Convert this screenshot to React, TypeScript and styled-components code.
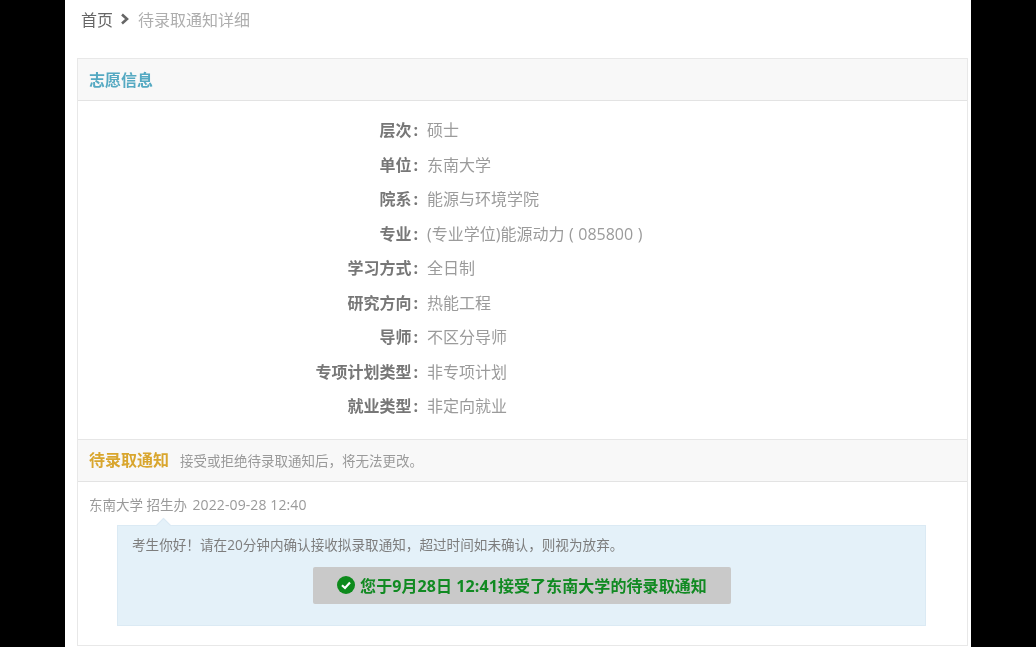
import React from "react";
import styled, { createGlobalStyle } from "styled-components";

const Global = createGlobalStyle`
  html, body { margin: 0; padding: 0; background: #000; }
  body { font-family: "Open Sans", "Noto Sans CJK SC", sans-serif; }
`;

const Stage = styled.div`
  width: 1036px;
  height: 647px;
  background: #000;
  overflow: hidden;
`;

const Sheet = styled.main`
  width: 906px;
  height: 647px;
  margin-left: 65px;
  background: #fff;
  overflow: hidden;
  display: flex;
  flex-direction: column;
  filter: blur(0.5px);
`;

const Breadcrumb = styled.nav`
  height: 58px;
  flex: none;
  box-sizing: border-box;
  padding: 0 0 21px 16px;
  display: flex;
  align-items: center;
  font-size: 16px;
`;

const Crumb = styled.span<{ $current?: boolean }>`
  color: ${(p) => (p.$current ? "#aeaeae" : "#666")};
`;

const Separator = styled.svg`
  width: 10px;
  height: 12px;
  margin: 1px 8px 0 7px;
  flex: none;
`;

const Panel = styled.section`
  margin: 0 3px 0 12px;
  border: 1px solid #e8e8e8;
  height: 588px;
  box-sizing: border-box;
`;

const SectionHead = styled.header`
  height: 42px;
  box-sizing: border-box;
  padding: 0 0 2px 11px;
  display: flex;
  align-items: center;
  background: #f8f8f8;
  border-bottom: 1px solid #e3e3e3;
`;

const SectionTitle = styled.h2<{ $tone: string }>`
  margin: 0;
  font-size: 16px;
  font-weight: 700;
  color: ${(p) => p.$tone};
`;

const SectionNote = styled.span`
  margin: 2px 0 0 11px;
  font-size: 13.5px;
  color: #9a9a9a;
`;

const Rows = styled.dl`
  margin: 0;
  padding: 11px 0 16px;
  border-bottom: 1px solid #e6e6e6;
  display: grid;
  grid-template-columns: 340px 1fr;
  grid-auto-rows: 34.5px;
  column-gap: 9px;
  align-items: center;
  font-size: 16px;
`;

const Label = styled.dt`
  text-align: right;
  font-weight: 700;
  color: #777;
`;

const Colon = styled.span`
  margin-left: 2px;
`;

const Value = styled.dd`
  margin: 0;
  color: #9b9b9b;
  word-spacing: 0.4px;
`;

const Message = styled.div`
  padding: 14px 40px 0 11px;
`;

const Meta = styled.div`
  font-size: 13.5px;
  line-height: 17px;
  color: #9a9a9a;
`;

const MetaTime = styled.span`
  margin-left: 2px;
  font-size: 14px;
  letter-spacing: 0.1px;
`;

const Bubble = styled.div`
  position: relative;
  margin: 11px 0 0 28px;
  height: 101px;
  width: 809px;
  box-sizing: border-box;
  padding: 11px 14px 0;
  background: #e4f1f9;
  border: 1px solid #dbeaf4;
  display: flex;
  flex-direction: column;
  &::before {
    content: "";
    position: absolute;
    left: 40px;
    top: -6px;
    width: 10px;
    height: 10px;
    background: #e4f1f9;
    border-top: 1px solid #dbeaf4;
    border-left: 1px solid #dbeaf4;
    transform: rotate(45deg);
  }
`;

const BubbleText = styled.p`
  margin: 0;
  font-size: 13.6px;
  line-height: 16px;
  color: #7d7d7d;
`;

const Result = styled.div`
  margin: 14px 0 0 181px;
  width: 418px;
  height: 37px;
  border-radius: 2px;
  background: #c9c9c9;
  display: flex;
  align-items: center;
  justify-content: center;
  gap: 5px;
  font-size: 16px;
  font-weight: 700;
  letter-spacing: 0.08px;
  color: #118a22;
`;

const CheckIcon = styled.svg`
  width: 18px;
  height: 18px;
  flex: none;
`;

const rows: [string, string][] = [
  ["层次", "硕士"],
  ["单位", "东南大学"],
  ["院系", "能源与环境学院"],
  ["专业", "(专业学位)能源动力 ( 085800 )"],
  ["学习方式", "全日制"],
  ["研究方向", "热能工程"],
  ["导师", "不区分导师"],
  ["专项计划类型", "非专项计划"],
  ["就业类型", "非定向就业"],
];

export default function App() {
  return (
    <Stage>
      <Global />
      <Sheet>
        <Breadcrumb>
          <Crumb>首页</Crumb>
          <Separator viewBox="0 0 10 12">
            <polyline points="2,1.5 7,6 2,10.5" fill="none" stroke="#666" strokeWidth="2.6" />
          </Separator>
          <Crumb $current>待录取通知详细</Crumb>
        </Breadcrumb>
        <Panel>
          <SectionHead>
            <SectionTitle $tone="#55a9c2">志愿信息</SectionTitle>
          </SectionHead>
          <Rows>
            {rows.map(([k, v]) => (
              <React.Fragment key={k}>
                <Label>
                  {k}
                  <Colon>:</Colon>
                </Label>
                <Value>{v}</Value>
              </React.Fragment>
            ))}
          </Rows>
          <SectionHead>
            <SectionTitle $tone="#d9a62e">待录取通知</SectionTitle>
            <SectionNote>接受或拒绝待录取通知后，将无法更改。</SectionNote>
          </SectionHead>
          <Message>
            <Meta>
              东南大学 招生办 <MetaTime>2022-09-28 12:40</MetaTime>
            </Meta>
            <Bubble>
              <BubbleText>考生你好！请在20分钟内确认接收拟录取通知，超过时间如未确认，则视为放弃。</BubbleText>
              <Result>
                <CheckIcon viewBox="0 0 18 18">
                  <circle cx="9" cy="9" r="9" fill="#0d8a1c" />
                  <polyline points="5,9.3 8,12 13,6.6" fill="none" stroke="#fff" strokeWidth="2.2" />
                </CheckIcon>
                您于9月28日 12:41接受了东南大学的待录取通知
              </Result>
            </Bubble>
          </Message>
        </Panel>
      </Sheet>
    </Stage>
  );
}
